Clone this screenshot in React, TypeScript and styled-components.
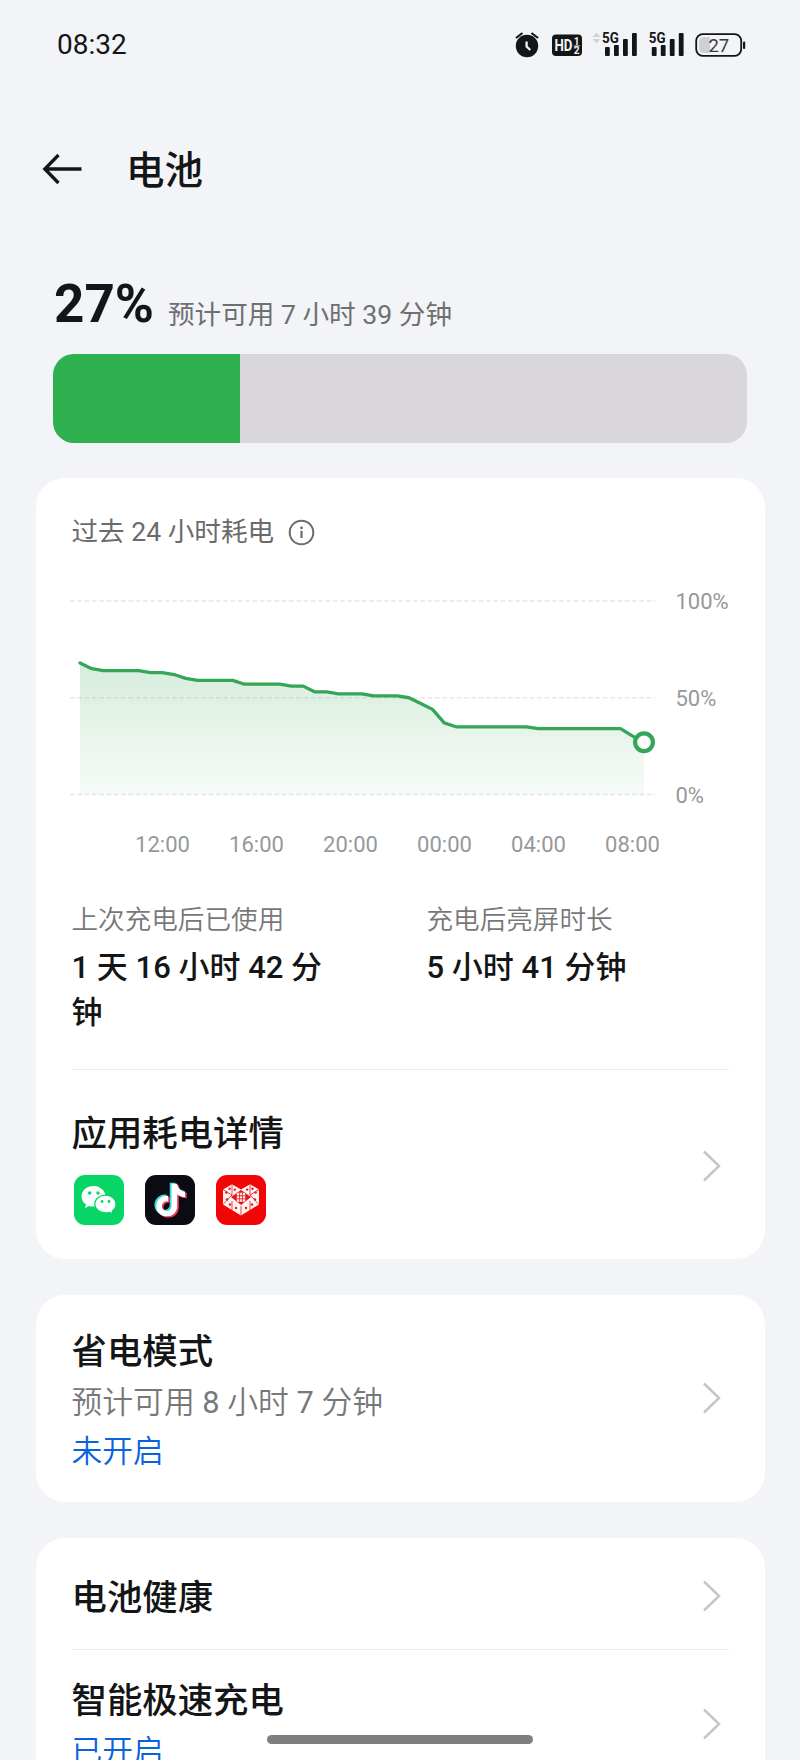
import React from 'react';
import styled, { createGlobalStyle } from 'styled-components';
import { FaTiktok } from 'react-icons/fa6';

const GlobalStyle = createGlobalStyle`
  * { box-sizing: border-box; }
  body {
    margin: 0;
    background: #f2f4f8;
    font-family: Roboto, 'Noto Sans CJK SC', sans-serif;
    color: #141516;
  }
`;

const Screen = styled.div`
  position: relative;
  width: 800px;
  height: 1760px;
  overflow: hidden;
  background: #f2f4f8;
`;

const StatusBar = styled.header`
  display: flex;
  align-items: center;
  justify-content: space-between;
  height: 90px;
  padding: 0 54px 0 57px;
`;

const Clock = styled.time`
  font-size: 28px;
  line-height: 32px;
`;

const TitleBar = styled.div`
  display: flex;
  align-items: center;
  gap: 42px;
  height: 160px;
  padding: 0 42px 2px;
`;

const Title = styled.h1`
  margin: 0;
  padding-top: 3px;
  font-size: 38.5px;
  line-height: 50px;
  font-weight: 500;
`;

const Level = styled.section`
  display: flex;
  flex-direction: column;
  height: 228px;
  padding: 24px 53px 0;
`;

const LevelText = styled.div`
  display: flex;
  align-items: flex-start;
  gap: 14px;
  height: 80px;
  padding-left: 1px;
`;

const Percent = styled.span`
  font-size: 53px;
  line-height: 60px;
  font-weight: 700;
`;

const Estimate = styled.span`
  margin-top: 21px;
  font-size: 26.6px;
  line-height: 40px;
  color: #6e6f71;
`;

const LevelTrack = styled.div`
  height: 89px;
  border-radius: 21px;
  overflow: hidden;
  background: #d9d7dc;
`;

const LevelFill = styled.div<{ $percent: number }>`
  width: ${p => p.$percent}%;
  height: 100%;
  background: #30b150;
`;

const Card = styled.section<{ $height: number }>`
  display: flex;
  flex-direction: column;
  height: ${p => p.$height}px;
  margin: 0 35.5px 36px;
  padding: 0 36px;
  border-radius: 29px;
  background: #fff;
`;

const ChartHeading = styled.div`
  display: flex;
  align-items: center;
  gap: 14px;
  height: 84px;
  padding-top: 24px;
  font-size: 26.6px;
  line-height: 38px;
  color: #6a6b6c;
`;

const ChartRow = styled.div`
  display: flex;
  height: 262px;
  margin-left: -2px;
`;

const Plot = styled.svg`
  display: block;
  flex: none;
`;

const AxisX = styled.div`
  display: flex;
  width: 564px;
  margin-left: 46px;
`;

const AxisXLabel = styled.span`
  width: 94px;
  text-align: center;
  font-size: 22px;
  line-height: 26px;
  color: #979899;
`;

const AxisY = styled.div`
  display: flex;
  flex-direction: column;
  justify-content: space-between;
  height: 220px;
  margin: 27px 0 0 19px;
  font-size: 22px;
  line-height: 26px;
  color: #979899;
`;

const PlotColumn = styled.div`
  width: 587px;
`;

const Stats = styled.div`
  display: grid;
  grid-template-columns: 355px 1fr;
  height: 246px;
  padding-top: 76px;
  border-bottom: 1px solid #e9eaec;
`;

const StatLabel = styled.div`
  font-size: 26.6px;
  line-height: 40px;
  font-weight: 350;
  color: #777879;
`;

const StatValue = styled.div`
  width: 276px;
  padding-top: 5px;
  font-size: 31px;
  line-height: 45px;
  font-weight: 500;
`;

const Row = styled.div<{ $height: number; $top?: number }>`
  display: flex;
  align-items: center;
  justify-content: space-between;
  height: ${p => p.$height}px;
  padding: ${p => p.$top ?? 0}px 8px 0 0;
  flex: none;
`;

const RowText = styled.div<{ $top?: number }>`
  padding-top: ${p => p.$top ?? 0}px;
`;

const Divider = styled.hr`
  width: 100%;
  height: 1px;
  margin: 0;
  border: 0;
  flex: none;
  background: #e9eaec;
`;

const RowTitle = styled.h2`
  margin: 0;
  font-size: 35.4px;
  line-height: 52px;
  font-weight: 500;
`;

const RowNote = styled.p<{ $accent?: boolean }>`
  margin: 0;
  font-size: 30.8px;
  line-height: 49px;
  font-weight: 350;
  color: ${p => (p.$accent ? '#0a62dc' : '#777879')};
`;

const Figure = styled.span`
  font-weight: 400;
`;

const AppIcons = styled.div`
  display: flex;
  gap: 21px;
  padding: 15px 0 0 2px;
`;

const HomeIndicator = styled.div`
  position: absolute;
  left: 267px;
  top: 1735px;
  width: 266px;
  height: 9px;
  border-radius: 5px;
  background: #7f7f7f;
`;

const levels = [
  68, 65, 64, 64, 64, 64, 63, 63, 62, 60, 59, 59, 59, 59, 57, 57, 57, 57, 56, 56, 53, 53, 52, 52, 52,
  51, 51, 51, 50, 47, 44, 37, 35, 35, 35, 35, 35, 35, 35, 34, 34, 34, 34, 34, 34, 34, 34, 30.3, 27,
];
const hours = ['12:00', '16:00', '20:00', '00:00', '04:00', '08:00'];

const gridTop = 39;
const gridHeight = 193.5;
const plotX = (i: number) => 10 + i * 11.75;
const plotY = (v: number) => gridTop + gridHeight * (1 - v / 100);

function BatteryPlot() {
  const line = levels.map((v, i) => `${plotX(i)},${plotY(v)}`).join(' L');
  const endX = plotX(levels.length - 1);
  return (
    <Plot width="587" height="270" viewBox="0 0 587 270">
      <defs>
        <linearGradient id="fade" x1="0" y1="0" x2="0" y2="1">
          <stop offset="0" stopColor="#30a850" stopOpacity="0.2" />
          <stop offset="1" stopColor="#50a860" stopOpacity="0.05" />
        </linearGradient>
      </defs>
      {[100, 50, 0].map(v => (
        <path key={v} d={`M0 ${plotY(v)}H585`} stroke="#e5e7e7" strokeWidth="1.4" strokeDasharray="4.6 2.7" />
      ))}
      <path d={`M${line} V${plotY(0)} H10Z`} fill="url(#fade)" />
      <path d={`M${line}`} fill="none" stroke="#35a657" strokeWidth="3.3" strokeLinejoin="round" strokeLinecap="round" />
      <circle cx={endX} cy={plotY(27)} r="8.9" fill="#fff" stroke="#35a657" strokeWidth="4.2" />
    </Plot>
  );
}

function Chevron() {
  return (
    <svg width="19" height="32" viewBox="0 0 19 32" fill="none">
      <path d="M2 1.5L17 16L2 30.5" stroke="#c5c6c8" strokeWidth="2.5" />
    </svg>
  );
}

function BackArrow() {
  return (
    <svg width="42" height="32" viewBox="0 0 42 32" fill="none" stroke="#141516" strokeWidth="3.3">
      <path d="M16.5 2L2.8 16L16.5 30M2.8 16H39.5" />
    </svg>
  );
}

function InfoIcon() {
  return (
    <svg width="27" height="27" viewBox="0 0 27 27" fill="none" stroke="#6a6b6c" strokeWidth="2">
      <circle cx="13.5" cy="13.5" r="11.8" />
      <path d="M13.5 11.8V19" strokeWidth="2.2" />
      <circle cx="13.5" cy="8.9" r="1.4" fill="#6a6b6c" stroke="none" />
    </svg>
  );
}

const signalBars = [
  { x: 0, h: 9 },
  { x: 9, h: 11 },
  { x: 18, h: 17 },
  { x: 27, h: 23 },
];

function Signal({ x }: { x: number }) {
  return (
    <g transform={`translate(${x} 0)`} fill="#141516">
      {signalBars.map(b => (
        <rect key={b.x} x={b.x} y={41 - b.h} width="4.8" height={b.h} rx="1" />
      ))}
      <text x="-3" y="28" fontSize="15.5" fontWeight="700" textLength="16.8" lengthAdjust="spacingAndGlyphs"
        stroke="#f2f4f8" strokeWidth="2.4" paintOrder="stroke">5G</text>
    </g>
  );
}

function StatusIcons() {
  return (
    <svg width="232" height="60" viewBox="514 0 232 60" fontFamily="Roboto, sans-serif">
      <circle cx="527" cy="31" r="11.2" fill="#141516" />
      <path d="M516 23L522.5 18M538 23L531.5 18" stroke="#141516" strokeWidth="2.2" />
      <path d="M526.6 26.5V31.5L530.3 35" fill="none" stroke="#f2f4f8" strokeWidth="2.3" />
      <rect x="552" y="19.5" width="30" height="21.5" rx="4" fill="#141516" />
      <text x="554.5" y="36" fontSize="16" fontWeight="700" fill="#f2f4f8" textLength="18" lengthAdjust="spacingAndGlyphs">HD</text>
      <text x="573.8" y="30" fontSize="10" fontWeight="700" fill="#f2f4f8">1</text>
      <text x="573.8" y="38.8" fontSize="10" fontWeight="700" fill="#f2f4f8">2</text>
      <path d="M573.6 30.9H580" stroke="#f2f4f8" strokeWidth="0.8" />
      <path d="M592.5 22L596.5 17.5L600.5 22ZM592.5 24L596.5 28.5L600.5 24Z" fill="#d2d3d6" />
      <Signal x={605} />
      <Signal x={651.8} />
      <rect x="696.2" y="19.2" width="45" height="21.6" rx="6.5" fill="none" stroke="#141516" strokeWidth="1.8" />
      <path d="M703.5 22H710V38H703.5A4.5 4.5 0 0 1 699 33.5V26.5A4.5 4.5 0 0 1 703.5 22Z" fill="#cfd0d3" />
      <rect x="743" y="26.5" width="2.2" height="7.5" rx="1" fill="#141516" />
      <text x="718.8" y="36.5" fontSize="18.5" textAnchor="middle" fill="#3a3b3d">27</text>
    </svg>
  );
}

function WeChatIcon() {
  return (
    <svg width="50" height="50" viewBox="0 0 50 50">
      <rect width="50" height="50" rx="11" fill="#07d566" />
      <path d="M19.5 11C12.5 11 7.5 15.7 7.5 21.5C7.5 24.8 9.2 27.6 12 29.5L11 33L15.2 30.9C19 32 24 31.7 27 29.5C31 26.5 32.5 22 30.8 18C29 13.7 24.5 11 19.5 11Z" fill="#fff" />
      <path d="M31.5 20.2C25.5 20.2 20.8 24.2 20.8 29C20.8 34 25.5 37.8 31.5 37.8C32.9 37.8 34.2 37.6 35.4 37.2L39 39L38.2 36C40.6 34.4 42 32 42 29C42 24.2 37.3 20.2 31.5 20.2Z" fill="#fff" stroke="#07d566" strokeWidth="1.2" />
      <g fill="#07d566">
        <circle cx="15.7" cy="18" r="1.7" />
        <circle cx="24" cy="18" r="1.7" />
        <circle cx="28" cy="26.5" r="1.4" />
        <circle cx="35" cy="26.5" r="1.4" />
      </g>
    </svg>
  );
}

function TikTokIcon() {
  return (
    <svg width="50" height="50" viewBox="0 0 50 50">
      <rect width="50" height="50" rx="11" fill="#0b0b14" />
      <FaTiktok x="7.4" y="7.4" size={33} color="#35e0e2" />
      <FaTiktok x="10.8" y="9.8" size={33} color="#f23a5f" />
      <FaTiktok x="9.2" y="8.6" size={33} color="#fff" />
    </svg>
  );
}

const seeds = [
  [10.3, 17.5], [13.6, 13.8], [18.8, 14.6], [31.2, 14.6], [36.4, 13.8], [39.7, 17.5],
  [11, 24.5], [39, 24.5], [14, 29.5], [36, 29.5], [20, 33], [30, 33],
];

function PinduoduoIcon() {
  return (
    <svg width="50" height="50" viewBox="0 0 50 50">
      <rect width="50" height="50" rx="11" fill="#f20505" />
      <path d="M7 14.5L16 9.3L25 14.5L34 9.3L43 14.5V29.5L25 40.5L7 29.5Z" fill="#fff4ee" />
      <path
        d="M7 14.5L16 20M43 14.5L34 20M16 9.3V20M34 9.3V20M7 29.5L16 20M43 29.5L34 20M16 35V26M34 35V26M25 31V40"
        fill="none" stroke="#e21420" strokeWidth="0.8" />
      <path d="M25 15L15 22L25 30L35 22Z" fill="#e21420" />
      <rect x="20.8" y="17.8" width="8.4" height="9" rx="1.5" fill="#fff4ee" />
      <path d="M23.6 18V26.5M26.400 18V26.500M21 20.800H29M21 23.800H29" stroke="#e21420" strokeWidth="0.8" />
      {seeds.map(([x, y]) => (
        <circle key={`${x}-${y}`} cx={x} cy={y} r="1.2" fill="#dd1828" />
      ))}
    </svg>
  );
}

export default function App() {
  return (
    <Screen>
      <GlobalStyle />
      <StatusBar>
        <Clock>08:32</Clock>
        <StatusIcons />
      </StatusBar>
      <TitleBar>
        <BackArrow />
        <Title>电池</Title>
      </TitleBar>
      <Level>
        <LevelText>
          <Percent>27%</Percent>
          <Estimate>预计可用 7 小时 39 分钟</Estimate>
        </LevelText>
        <LevelTrack>
          <LevelFill $percent={27} />
        </LevelTrack>
      </Level>
      <Card $height={780.5}>
        <ChartHeading>
          <span>过去 24 小时耗电</span>
          <InfoIcon />
        </ChartHeading>
        <ChartRow>
          <PlotColumn>
            <BatteryPlot />
            <AxisX>
              {hours.map(h => (
                <AxisXLabel key={h}>{h}</AxisXLabel>
              ))}
            </AxisX>
          </PlotColumn>
          <AxisY>
            <span>100%</span>
            <span>50%</span>
            <span>0%</span>
          </AxisY>
        </ChartRow>
        <Stats>
          <div>
            <StatLabel>上次充电后已使用</StatLabel>
            <StatValue>1 天 16 小时 42 分钟</StatValue>
          </div>
          <div>
            <StatLabel>充电后亮屏时长</StatLabel>
            <StatValue>5 小时 41 分钟</StatValue>
          </div>
        </Stats>
        <Row $height={187} $top={5}>
          <RowText>
            <RowTitle>应用耗电详情</RowTitle>
            <AppIcons>
              <WeChatIcon />
              <TikTokIcon />
              <PinduoduoIcon />
            </AppIcons>
          </RowText>
          <Chevron />
        </Row>
      </Card>
      <Card $height={207}>
        <Row $height={207}>
          <RowText $top={5}>
            <RowTitle>省电模式</RowTitle>
            <RowNote>
              预计可用<Figure> 8 </Figure>小时<Figure> 7 </Figure>分钟
            </RowNote>
            <RowNote $accent>未开启</RowNote>
          </RowText>
          <Chevron />
        </Row>
      </Card>
      <Card $height={300}>
        <Row $height={111} $top={5}>
          <RowText $top={4}>
            <RowTitle>电池健康</RowTitle>
          </RowText>
          <Chevron />
        </Row>
        <Divider />
        <Row $height={148}>
          <RowText $top={3}>
            <RowTitle>智能极速充电</RowTitle>
            <RowNote $accent>已开启</RowNote>
          </RowText>
          <Chevron />
        </Row>
      </Card>
      <HomeIndicator />
    </Screen>
  );
}
